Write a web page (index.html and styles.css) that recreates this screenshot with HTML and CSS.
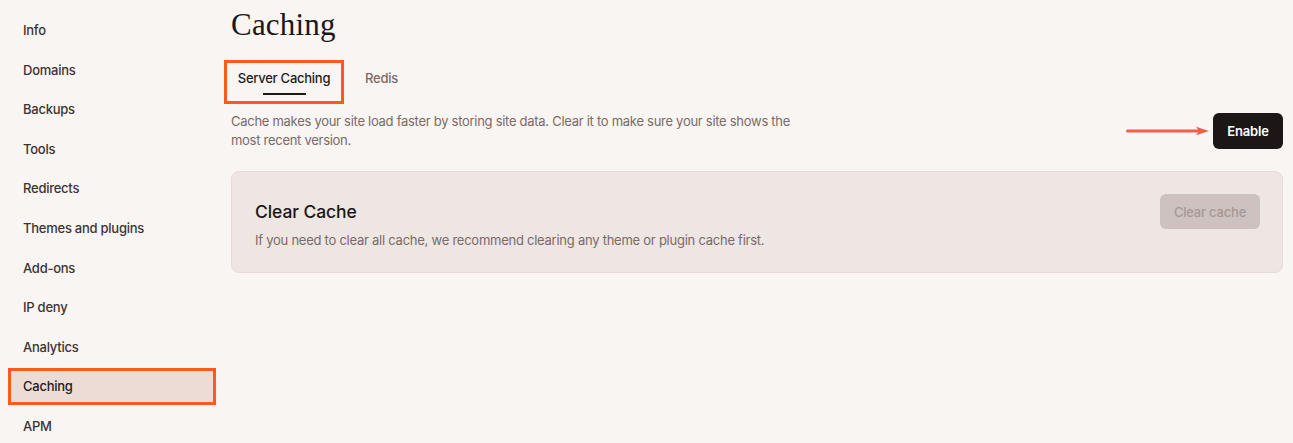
FILE: index.html
```html
<!DOCTYPE html>
<html lang="en">
<head>
<meta charset="utf-8">
<title>Caching</title>
<link rel="stylesheet" href="styles.css">
</head>
<body>
<div class="layout">
  <nav class="sidebar">
    <a class="nav-item">Info</a>
    <a class="nav-item">Domains</a>
    <a class="nav-item">Backups</a>
    <a class="nav-item">Tools</a>
    <a class="nav-item">Redirects</a>
    <a class="nav-item">Themes and plugins</a>
    <a class="nav-item">Add-ons</a>
    <a class="nav-item">IP deny</a>
    <a class="nav-item">Analytics</a>
    <a class="nav-item active">Caching</a>
    <a class="nav-item">APM</a>
  </nav>
  <main class="main">
    <h1 class="title">Caching</h1>
    <div class="tabs">
      <div class="tab active"><span class="tab-label">Server Caching</span><span class="tab-line"></span></div>
      <div class="tab"><span class="tab-label">Redis</span></div>
    </div>
    <div class="intro">
      <p class="intro-text">Cache makes your site load faster by storing site data. Clear it to make sure your site shows the most recent version.</p>
      <div class="intro-actions">
        <svg class="arrow" width="84" height="10" viewBox="0 0 84 10" aria-hidden="true">
          <line x1="1.5" y1="5" x2="76" y2="5" stroke="#f35d4c" stroke-width="3" stroke-linecap="round"/>
          <path d="M70 0.8 L83 5 L70 9.2 L73 5 Z" fill="#f35d4c"/>
        </svg>
        <button class="btn-primary">Enable</button>
      </div>
    </div>
    <section class="card">
      <div class="card-body">
        <h2 class="card-title">Clear Cache</h2>
        <p class="card-text">If you need to clear all cache, we recommend clearing any theme or plugin cache first.</p>
      </div>
      <button class="btn-disabled">Clear cache</button>
    </section>
  </main>
</div>
</body>
</html>
```
FILE: styles.css
```css
* { box-sizing: border-box; }
html, body { margin: 0; padding: 0; }
body {
  background: #f9f5f2;
  font-family: Inter, "Noto Sans", sans-serif;
  letter-spacing: -0.25px;
  color: #1f1919;
  width: 1293px;
  height: 443px;
  overflow: hidden;
}
.layout {
  display: grid;
  grid-template-columns: 231px 1fr;
}
.sidebar {
  display: flex;
  flex-direction: column;
  gap: 2.6px;
  padding: 11.5px 0 0 8px;
}
.nav-item {
  display: flex;
  align-items: center;
  width: 208px;
  height: 37px;
  padding-left: 15px;
  font-size: 13px;
  font-weight: 500;
  color: #3d3335;
}
.nav-item.active {
  border: 3px solid #fe5a1d;
  padding-left: 12px;
  background: #ecdcd5;
  color: #1f1919;
}
.main {
  padding: 7px 10px 0 0;
}
.title {
  margin: 0;
  font-family: "Liberation Serif", "Times New Roman", serif;
  font-weight: 400;
  font-size: 31px;
  line-height: 36px;
  letter-spacing: 0.2px;
  color: #1c1616;
}
.tabs {
  display: flex;
  align-items: flex-start;
  gap: 21px;
  margin: 17px 0 0 -7px;
}
.tab {
  display: flex;
  flex-direction: column;
  align-items: center;
  height: 44px;
  padding-top: 8px;
}
.tab.active {
  width: 120px;
  border: 3px solid #fe5a1d;
  padding-top: 5px;
}
.tab-label {
  font-size: 13px;
  font-weight: 500;
  line-height: 20px;
  color: #7a6a69;
}
.tab.active .tab-label { color: #1f1919; }
.tab-line {
  width: 43px;
  height: 2px;
  margin-top: 5px;
  background: #1f1919;
}
.intro {
  display: flex;
  align-items: center;
  justify-content: space-between;
  margin-top: 8px;
}
.intro-text {
  margin: 0;
  max-width: 576px;
  font-size: 13px;
  line-height: 19px;
  letter-spacing: -0.28px;
  color: #7b6a69;
}
.intro-actions {
  display: flex;
  align-items: center;
  gap: 3px;
}
.arrow { display: block; }
.btn-primary {
  width: 70px;
  height: 36px;
  border: 0;
  border-radius: 6px;
  background: #1c1616;
  color: #ffffff;
  font-family: Inter, "Noto Sans", sans-serif;
  letter-spacing: -0.2px;
  font-size: 13px;
  font-weight: 600;
}
.card {
  display: flex;
  justify-content: space-between;
  align-items: flex-start;
  margin-top: 21px;
  height: 102px;
  padding: 22px 22px 0 23px;
  background: #ede6e3;
  border: 1px solid #e6dbd8;
  border-radius: 8px;
}
.card-body { padding-top: 6px; }
.card-title {
  margin: 0;
  font-size: 17.5px;
  font-weight: 500;
  line-height: 24px;
  letter-spacing: -0.1px;
  color: #1c1616;
}
.card-text {
  margin: 7px 0 0;
  font-size: 13px;
  line-height: 19px;
  color: #7b6a69;
}
.btn-disabled {
  width: 100px;
  height: 35px;
  border: 0;
  border-radius: 6px;
  background: #cdc2bf;
  color: #a79896;
  font-family: Inter, "Noto Sans", sans-serif;
  letter-spacing: -0.2px;
  font-size: 13px;
  font-weight: 500;
}
```
